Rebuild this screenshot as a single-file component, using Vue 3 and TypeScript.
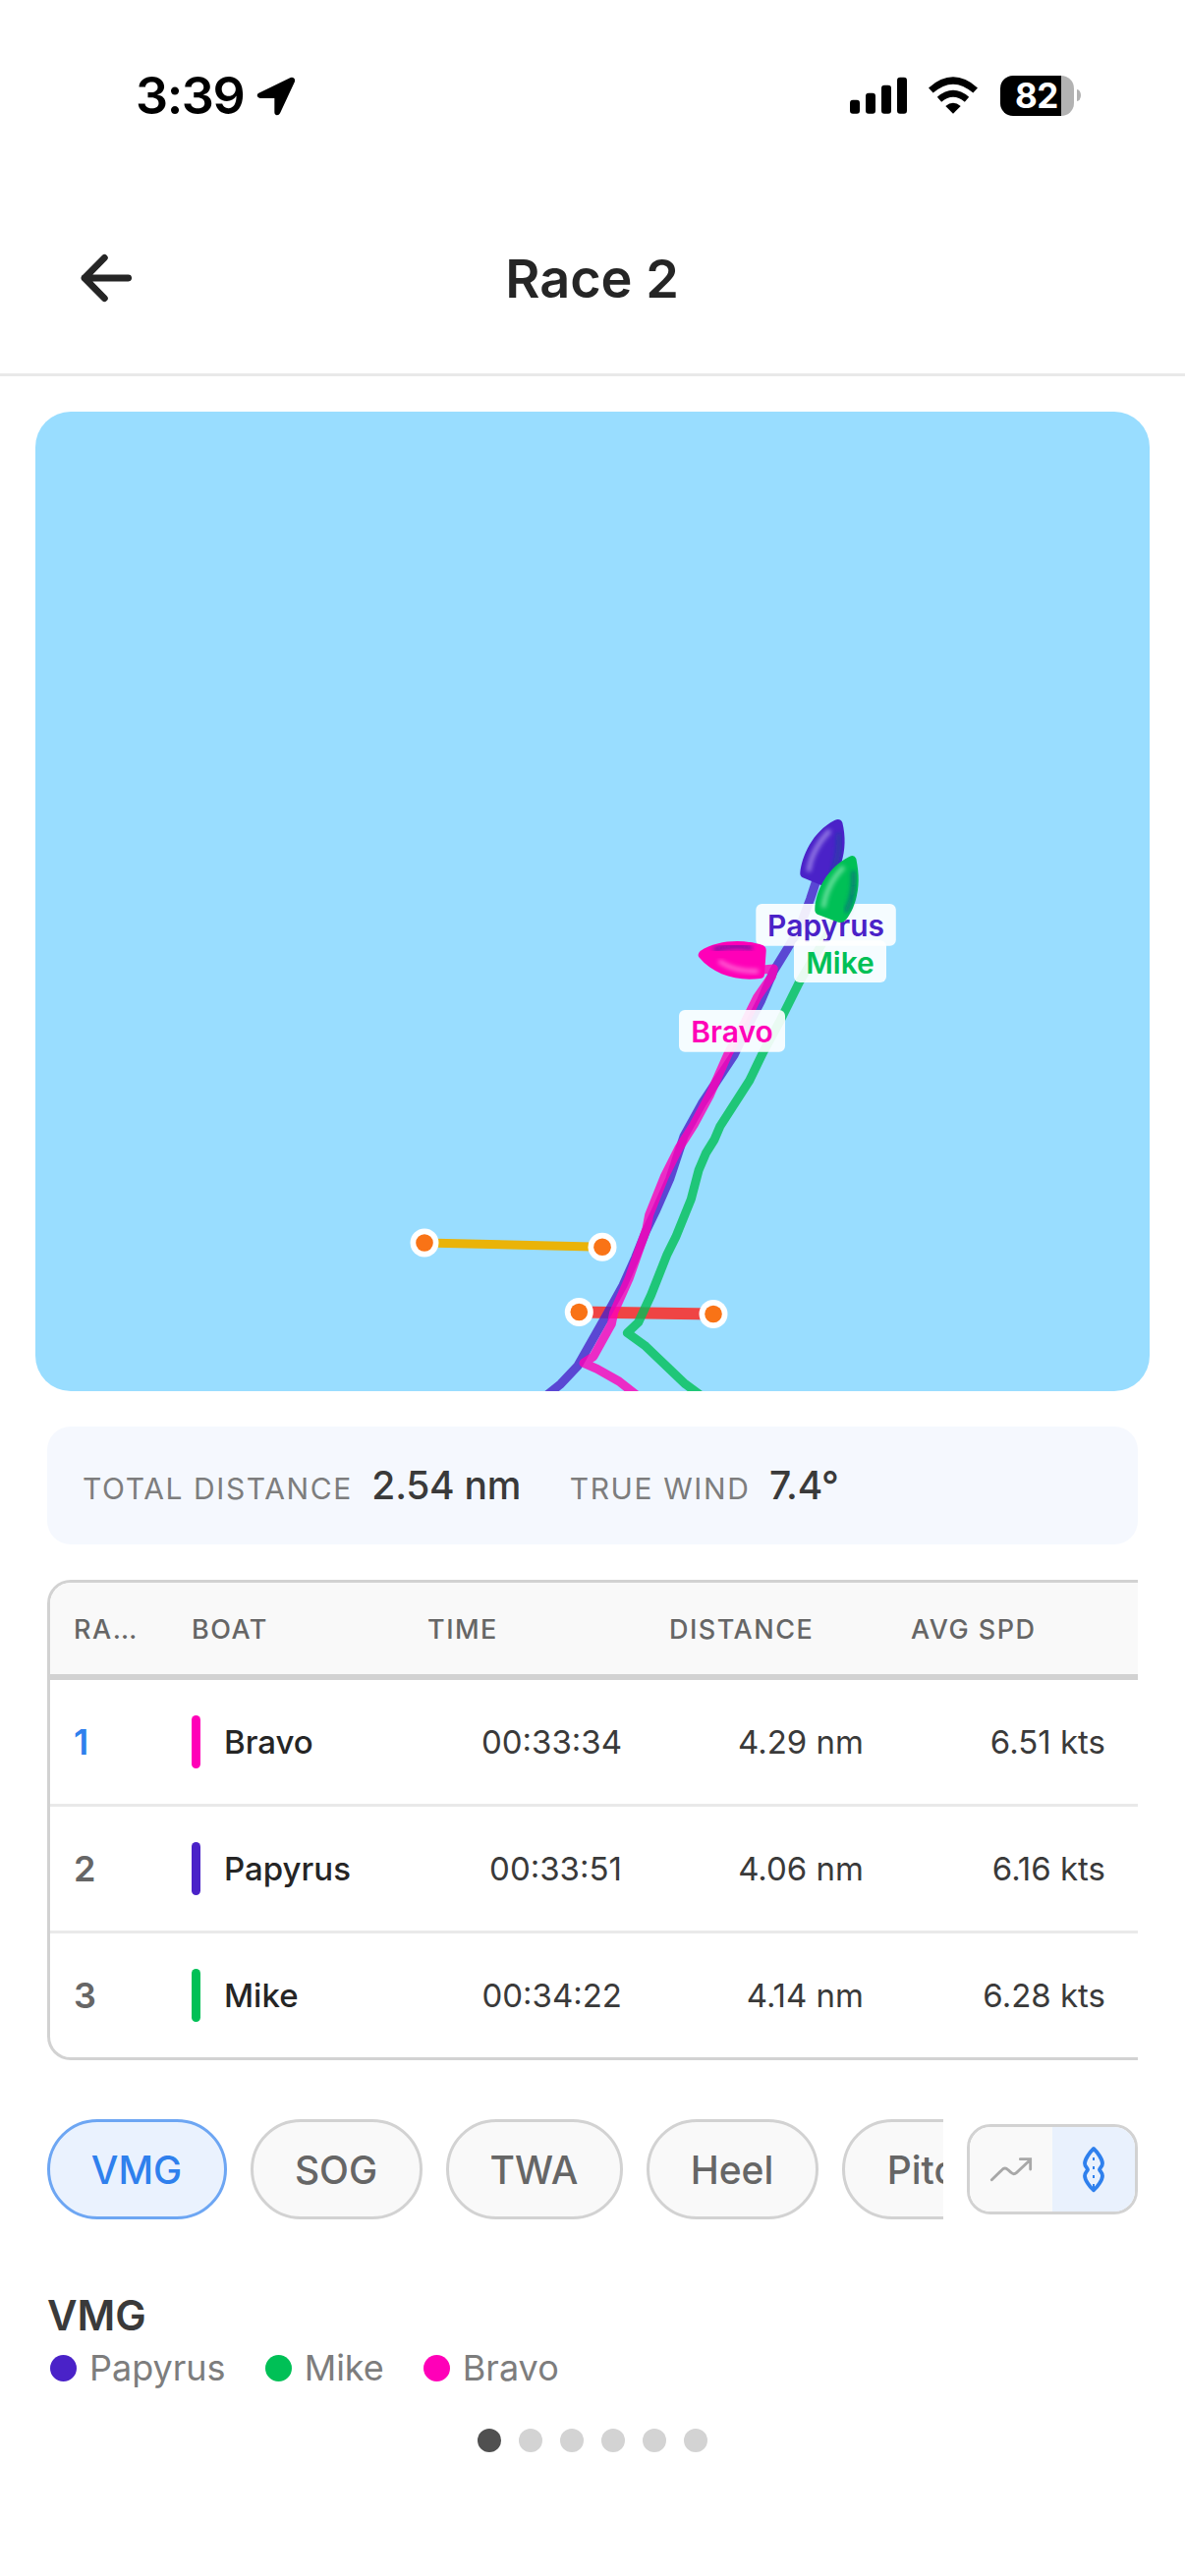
<script setup lang="ts">
interface Result {
  rank: number
  boat: string
  color: string
  time: string
  distance: string
  speed: string
}

const PURPLE = '#4a22c8'
const GREEN = '#00c056'
const PINK = '#ff00b8'

const results: Result[] = [
  { rank: 1, boat: 'Bravo', color: PINK, time: '00:33:34', distance: '4.29 nm', speed: '6.51 kts' },
  { rank: 2, boat: 'Papyrus', color: PURPLE, time: '00:33:51', distance: '4.06 nm', speed: '6.16 kts' },
  { rank: 3, boat: 'Mike', color: GREEN, time: '00:34:22', distance: '4.14 nm', speed: '6.28 kts' },
]

const metrics = [
  { name: 'VMG', width: 183 },
  { name: 'SOG', width: 175 },
  { name: 'TWA', width: 180 },
  { name: 'Heel', width: 175 },
  { name: 'Pitch', width: 186 },
]

const legend = [
  { name: 'Papyrus', color: PURPLE },
  { name: 'Mike', color: GREEN },
  { name: 'Bravo', color: PINK },
]

const buoys = [
  [432, 1265],
  [613, 1269.3],
  [589.3, 1335.5],
  [726, 1337.5],
]

const labels = [
  { name: 'Papyrus', color: PURPLE, x: 769.3, y: 920, w: 142.5 },
  { name: 'Mike', color: GREEN, x: 808, y: 957.3, w: 94 },
  { name: 'Bravo', color: PINK, x: 691, y: 1028, w: 108 },
]
</script>

<template>
  <div class="screen">
    <div class="status">
      <div class="clock">
        <span class="clock-text">3:39</span>
        <svg width="40" height="40" viewBox="0 0 120 120">
          <path d="M7 50 L104 3 Q110 1 115 5 Q119 9 117 15 L72 112 Q69 118 63 118 Q55 117 55 109 V66 H11 Q3 65 2 58 Q2 52 7 50Z" />
        </svg>
      </div>
      <div class="signals">
        <svg class="bars" width="58" height="38" viewBox="0 0 174 114">
          <rect x="0" y="71" width="30" height="42" rx="9" />
          <rect x="48" y="50" width="30" height="63" rx="9" />
          <rect x="96" y="26" width="30" height="87" rx="9" />
          <rect x="144" y="2" width="30" height="111" rx="9" />
        </svg>
        <svg class="wifi" width="52" height="38" viewBox="0 0 156 114">
          <path d="M78 113 L55 90 Q78 70 101 90Z" />
          <path d="M36 70 Q78 34 120 70" fill="none" stroke="#000" stroke-width="20" />
          <path d="M10 42 Q78 -18 146 42" fill="none" stroke="#000" stroke-width="21" />
        </svg>
        <div class="battery"><span>82</span></div>
        <div class="nub"></div>
      </div>
    </div>

    <header class="header">
      <svg class="back" width="52" height="50" viewBox="0 0 156 150">
        <path d="M146 75 H12 M73 13 L12 75 L73 137" fill="none" stroke="#252525" stroke-width="20.5" stroke-linecap="round" stroke-linejoin="round" />
      </svg>
      <h1>Race 2</h1>
    </header>

    <svg class="map" width="1134" height="997" viewBox="36 419 1134 997">
      <defs>
        <filter id="soft" x="-40%" y="-40%" width="180%" height="180%"><feGaussianBlur stdDeviation="6" /></filter>
      </defs>
      <rect x="36" y="419" width="1134" height="997" fill="#99ddff" />
      <line x1="432" y1="1265" x2="613" y2="1269.3" stroke="#eab308" stroke-width="9" />
      <line x1="589.3" y1="1335.5" x2="726" y2="1337.5" stroke="#ef4444" stroke-width="12" />

      <!-- boat tracks -->
      <g transform="translate(380 1040) scale(.33333)" fill="none" stroke-width="27" stroke-opacity=".8" stroke-linejoin="round" stroke-linecap="round">
        <path :stroke="PURPLE" d="M1362 -460 L1334 -375 L1300 -285 L1262 -220 L1222 -155 L1184 -65 L1135 30 L1101 102 L1003 250 L948 350 L905 480 L861 580 L832 640 L800 720 L762 805 L715 890 L623 1052 L572 1106 L520 1148" />
        <path :stroke="GREEN" d="M1415 -320 L1384 -262 L1300 -120 L1243 -5 L1190 93 L1148 180 L1058 320 L1041 360 L1016 400 L993 454 L970 542 L923 658 L897 710 L848 834 L809 918 L775 950 L828 988 L952 1106 L1005 1145" />
        <path :stroke="PINK" d="M1190 -159 L1222 -162 L1216 -138 L1172 -75 L1135 0 L1083 98 L1028 222 L978 315 L932 387 L890 470 L842 590 L834 632 L780 785 L734 888 L727 923 L672 1022 L642 1042 L683 1060 L750 1098 L810 1145" />
      </g>

      <g v-for="(b, i) in buoys" :key="i">
        <circle :cx="b[0]" :cy="b[1]" r="14.5" fill="#fff" />
        <circle :cx="b[0]" :cy="b[1]" r="8.8" fill="#f97316" />
      </g>

      <g v-for="l in labels" :key="l.name">
        <rect :x="l.x" :y="l.y" :width="l.w" height="42.7" rx="6" fill="#fff" fill-opacity=".9" />
        <text class="pin" :x="l.x + l.w / 2" :y="l.y + 33.3" :fill="l.color">{{ l.name }}</text>
      </g>

      <!-- hulls -->
      <g transform="translate(680 810) scale(.33333)">
        <path :fill="PURPLE" d="M508 75 Q525 67 532 82 C542 125 541 165 529 205 C518 240 498 264 478 273 Q470 275 460 270 L411 250 Q402 246 403 235 C408 185 440 110 508 75Z" />
        <path d="M430 225 C435 185 460 140 490 110" fill="none" stroke="#b9a6f5" stroke-opacity=".65" stroke-width="15" stroke-linecap="round" filter="url(#soft)" />
        <path d="M521 120 C524 165 515 205 500 240" fill="none" stroke="#134d94" stroke-opacity=".6" stroke-width="14" stroke-linecap="round" filter="url(#soft)" />
        <path :fill="GREEN" d="M553 186 Q568 178 574 192 C584 240 584 280 572 320 C563 350 550 370 540 382 Q532 390 520 386 L456 362 Q447 358 448 346 C450 290 485 220 553 186Z" />
        <path d="M475 335 C480 295 503 250 532 222" fill="none" stroke="#9af0be" stroke-opacity=".65" stroke-width="15" stroke-linecap="round" filter="url(#soft)" />
        <path d="M566 235 C569 280 560 320 545 350" fill="none" stroke="#0b4f90" stroke-opacity=".6" stroke-width="14" stroke-linecap="round" filter="url(#soft)" />
        <path :fill="PINK" d="M94 493 Q88 484 98 474 C150 440 230 436 290 457 Q300 462 299 475 L294 545 Q293 556 282 558 C210 567 140 548 94 493Z" />
        <path d="M145 468 C185 458 220 458 250 464" fill="none" stroke="#4a1f9c" stroke-opacity=".7" stroke-width="15" stroke-linecap="round" filter="url(#soft)" />
        <path d="M160 508 C190 528 230 536 270 536" fill="none" stroke="#ff8fe0" stroke-opacity=".65" stroke-width="14" stroke-linecap="round" filter="url(#soft)" />
      </g>
    </svg>

    <section class="summary">
      <span class="s-label">TOTAL DISTANCE</span>
      <span class="s-value dist">2.54 nm</span>
      <span class="s-label">TRUE WIND</span>
      <span class="s-value">7.4°</span>
    </section>

    <div class="table">
      <div class="row head">
        <span class="c-rank">RA…</span>
        <span class="c-boat">BOAT</span>
        <span class="c-num">TIME</span>
        <span class="c-num">DISTANCE</span>
        <span class="c-num">AVG SPD</span>
      </div>
      <div v-for="r in results" :key="r.rank" class="row">
        <span class="c-rank rank" :class="{ first: r.rank === 1 }">{{ r.rank }}</span>
        <span class="c-boat boat"><i :style="{ background: r.color }"></i>{{ r.boat }}</span>
        <span class="c-num num">{{ r.time }}</span>
        <span class="c-num num">{{ r.distance }}</span>
        <span class="c-num num">{{ r.speed }}</span>
      </div>
    </div>

    <div class="controls">
      <div class="chips">
        <div v-for="(m, i) in metrics" :key="m.name" class="chip" :class="{ on: i === 0 }" :style="{ width: m.width + 'px' }">{{ m.name }}</div>
      </div>
      <div class="toggle">
        <div class="half">
          <svg width="44" height="26" viewBox="0 0 132 78">
            <path d="M7 71 L38 41 Q47 31 57 41 L66 49 Q74 57 83 49 L125 10 M94 8 H125 V39" fill="none" stroke="#a8a8a8" stroke-width="8.5" stroke-linecap="round" stroke-linejoin="miter" />
          </svg>
        </div>
        <div class="half on">
          <svg width="24" height="48" viewBox="0 0 72 144">
            <path d="M36 9 C48 20 63 42 63 54 C63 63 56 67 54 73 C56 79 63 83 63 92 C63 104 48 126 36 136 C24 126 9 104 9 92 C9 83 16 79 18 73 C16 67 9 63 9 54 C9 42 24 20 36 9Z" fill="none" stroke="#2f80ed" stroke-width="11.5" stroke-linejoin="round" />
            <path d="M36 36 V45 M36 63 V72 M36 90 V99 M36 117 V130" stroke="#2f80ed" stroke-width="6" />
          </svg>
        </div>
      </div>
    </div>

    <section class="chart">
      <h2>VMG</h2>
      <div class="legend">
        <span v-for="l in legend" :key="l.name" class="key"><i :style="{ background: l.color }"></i>{{ l.name }}</span>
      </div>
    </section>

    <div class="dots">
      <i v-for="n in 6" :key="n" :class="{ on: n === 1 }"></i>
    </div>
  </div>
</template>

<style>
body {
  background: #fff;
}
</style>

<style scoped>
* {
  box-sizing: border-box;
}
.screen {
  width: 1206px;
  height: 2622px;
  overflow: hidden;
  background: #fff;
  font-family: Inter, 'Liberation Sans', sans-serif;
  display: flex;
  flex-direction: column;
}
.status {
  height: 186px;
  flex: none;
  padding: 8px 106px 0 138px;
  display: flex;
  align-items: center;
  justify-content: space-between;
}
.clock {
  display: flex;
  align-items: center;
  gap: 12px;
  padding-top: 2px;
}
.clock-text {
  width: 111px;
  font-size: 52px;
  line-height: 60px;
  font-weight: 600;
  letter-spacing: -1.4px;
  white-space: nowrap;
}
.signals {
  display: flex;
  align-items: center;
}
.wifi {
  margin: 0 22px 0 21px;
}
.battery {
  width: 75px;
  height: 41px;
  border-radius: 13px;
  background: linear-gradient(90deg, #000 62px, #b2b2b2 62px);
  color: #fff;
  font-size: 35px;
  line-height: 41px;
  font-weight: 700;
  padding-left: 15px;
  letter-spacing: -0.5px;
}
.nub {
  width: 4px;
  height: 12px;
  margin-left: 3px;
  border-radius: 0 4px 4px 0 / 0 6px 6px 0;
  background: #b2b2b2;
}
.header {
  height: 197px;
  flex: none;
  border-bottom: 3px solid #e9e9e9;
  display: grid;
  grid-template-columns: 134px 1fr 134px;
  align-items: center;
}
.back {
  margin-left: 82px;
}
h1 {
  margin: 0;
  padding: 2px 1px 0 0;
  text-align: center;
  font-size: 54px;
  line-height: 60px;
  font-weight: 600;
  color: #252525;
}
.map {
  display: block;
  flex: none;
  margin: 36px 36px 0;
  border-radius: 36px;
}
.pin {
  font: 600 30px Inter, 'Liberation Sans', sans-serif;
  text-anchor: middle;
}
.summary {
  flex: none;
  height: 120px;
  margin: 36px 48px 0;
  padding: 33px 36px 0;
  border-radius: 24px;
  background: #f5f8fe;
  display: flex;
  align-items: baseline;
  line-height: 54px;
  white-space: nowrap;
}
.s-label {
  font-size: 30px;
  letter-spacing: 1.6px;
  color: #7d7d7d;
  margin-right: 19.5px;
}
.s-value {
  font-size: 39px;
  font-weight: 500;
  letter-spacing: -0.25px;
  color: #3a3a3a;
}
.dist {
  margin-right: 49.5px;
}
.table {
  flex: none;
  margin: 36px 48px 0;
  border: 3px solid #d2d2d2;
  border-right: 0;
  border-radius: 24px 0 0 24px;
  overflow: hidden;
}
.row {
  display: flex;
  align-items: center;
  height: 129px;
  border-bottom: 3px solid #e9e9e9;
  white-space: nowrap;
}
.row:last-child {
  border-bottom: 0;
  height: 126px;
}
.head {
  height: 99px;
  padding-top: 2px;
  border-bottom: 6px solid #d2d2d2;
  background: #f9f9f9;
  color: #666;
  font-size: 27px;
  font-weight: 500;
  letter-spacing: 1.5px;
}
.c-rank {
  width: 120px;
  padding-left: 24px;
  flex: none;
}
.c-boat {
  width: 240px;
  padding-left: 24px;
  flex: none;
}
.c-num {
  width: 246px;
  padding: 0 24px;
  flex: none;
}
.rank {
  font-size: 36px;
  font-weight: 600;
  color: #666;
}
.first {
  color: #2f80ed;
}
.boat {
  display: flex;
  align-items: center;
  font-size: 33px;
  font-weight: 500;
  color: #252525;
}
.boat i {
  width: 9px;
  height: 54px;
  border-radius: 4.5px;
  margin-right: 24px;
}
.num {
  font-size: 33px;
  text-align: right;
  color: #3a3a3a;
}
.controls {
  flex: none;
  display: flex;
  align-items: center;
  justify-content: space-between;
  margin: 60px 48px 0;
}
.chips {
  width: 912px;
  display: flex;
  gap: 24px;
  overflow: hidden;
}
.chip {
  flex: none;
  height: 102px;
  padding-right: 1px;
  border: 3px solid #d2d2d2;
  border-radius: 51px;
  background: #f9f9f9;
  color: #666;
  font-size: 39px;
  font-weight: 500;
  display: flex;
  align-items: center;
  justify-content: center;
}
.chip.on {
  background: #eaf2fe;
  border-color: #6da6f3;
  color: #2f80ed;
}
.toggle {
  width: 174px;
  height: 92px;
  border: 3px solid #d2d2d2;
  border-radius: 24px;
  overflow: hidden;
  display: flex;
}
.half {
  flex: 1;
  display: flex;
  align-items: center;
  justify-content: center;
  background: #f9f9f9;
}
.half.on {
  background: #e9f1fd;
}
.chart {
  flex: none;
  margin: 72px 48px 0;
}
h2 {
  margin: 0;
  font-size: 42px;
  line-height: 52px;
  font-weight: 600;
  color: #3a3a3a;
}
.legend {
  display: flex;
  gap: 40px;
  padding-left: 3px;
  margin-top: 4px;
  font-size: 36px;
  line-height: 46px;
  color: #7d7d7d;
}
.key {
  display: flex;
  align-items: center;
}
.key i {
  width: 27px;
  height: 27px;
  border-radius: 50%;
  margin-right: 13px;
}
.dots {
  flex: none;
  display: flex;
  justify-content: center;
  gap: 18px;
  margin-top: 39px;
}
.dots i {
  width: 24px;
  height: 24px;
  border-radius: 50%;
  background: #d3d3d3;
}
.dots i.on {
  background: #505050;
}
</style>
